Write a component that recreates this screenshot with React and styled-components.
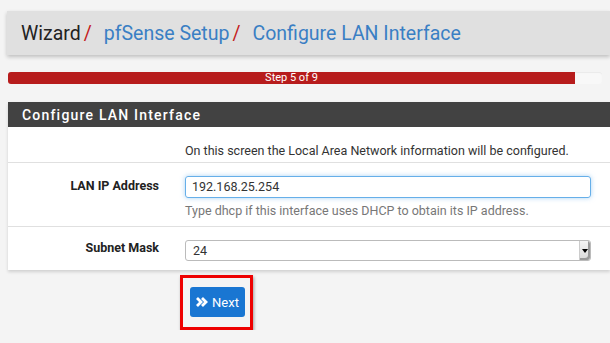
import React from "react";
import styled, { createGlobalStyle } from "styled-components";

const GlobalStyle = createGlobalStyle`
  html, body {
    margin: 0;
    padding: 0;
    background: #f4f4f4;
    font-family: Roboto, "Liberation Sans", sans-serif;
    overflow: hidden;
  }
`;

const Page = styled.div`
  display: flex;
  flex-direction: column;
  padding-top: 11px;
  width: 610px;
`;

const Header = styled.div`
  margin-left: 7px;
  height: 44px;
  display: flex;
  align-items: center;
  padding-left: 14px;
  background: #e0e0e0;
  box-shadow: 0 2px 4px rgba(0, 0, 0, 0.22);
  font-size: 19.5px;
  color: #222;
`;

const Crumb = styled.span`
  color: ${({ $link }) => ($link ? "#3a7fc4" : "#222")};
`;

const Sep = styled.span`
  color: #c41b1b;
  margin: 0 12px 0 3px;
`;

const Track = styled.div`
  margin: 17px 8px 0 8px;
  height: 12px;
  background: #f8f8f8;
  border-radius: 3px;
  box-shadow: inset 0 1px 1px rgba(0, 0, 0, 0.06);
  display: flex;
`;

const Bar = styled.div`
  height: 100%;
  background: #b71c1c;
  border-radius: 3px 0 0 3px;
  color: #fff;
  font-size: 11px;
  line-height: 12px;
  text-align: center;
`;

const Panel = styled.div`
  margin: 18px 0 0 8px;
  background: #fff;
  box-shadow: 0 2px 3px rgba(0, 0, 0, 0.15);
`;

const PanelHeading = styled.div`
  height: 25px;
  background: #424242;
  color: #fff;
  font-size: 14px;
  font-weight: 500;
  letter-spacing: 1.2px;
  line-height: 26px;
  padding-left: 14px;
`;

const Row = styled.div`
  display: grid;
  grid-template-columns: 162px 1fr;
  height: ${({ $h }) => $h}px;
  border-top: ${({ $first }) => ($first ? "none" : "1px solid #e0e0e0")};
  font-size: 12.5px;
  color: #333;
`;

const Label = styled.div`
  text-align: right;
  padding-right: 11px;
  padding-top: ${({ $top }) => $top}px;
  font-weight: 700;
  color: #222;
`;

const Field = styled.div`
  display: flex;
  flex-direction: column;
  padding: ${({ $top }) => $top}px 19px 0 15px;
`;

const Input = styled.div`
  height: 20px;
  border: 1px solid #66afe9;
  border-radius: 3px;
  box-shadow: 0 0 5px rgba(102, 175, 233, 0.55);
  padding-left: 6px;
  line-height: 20px;
  color: #333;
`;

const Help = styled.div`
  margin-top: 5px;
  color: #777;
`;

const Select = styled.div`
  height: 19px;
  border: 1px solid #bbb;
  border-radius: 3px;
  display: flex;
  align-items: stretch;
  line-height: 19px;
  color: #333;
`;

const SelectValue = styled.div`
  flex: 1;
  padding-left: 7px;
`;

const SelectArrow = styled.div`
  width: 10px;
  display: flex;
  align-items: center;
  justify-content: center;
  background: linear-gradient(#f4f4f4, #d8d8d8);
  border-left: 1px solid #ccc;
  box-shadow: inset -2px -2px 0 #999;
  border-radius: 0 3px 3px 0;

  &::after {
    content: "";
    border-left: 3px solid transparent;
    border-right: 3px solid transparent;
    border-top: 4px solid #000;
  }
`;

const Actions = styled.div`
  display: flex;
  padding: 5px 0 0 180px;
`;

const Highlight = styled.div`
  width: 67px;
  height: 49px;
  border: 3px solid #ee0000;
  box-shadow: 1px 2px 3px rgba(0, 0, 0, 0.35);
  display: flex;
  align-items: center;
  justify-content: center;
`;

const Button = styled.div`
  width: 55px;
  height: 30px;
  margin-left: 2px;
  margin-top: -1px;
  background: #1976d2;
  border-radius: 3px;
  color: #fff;
  font-size: 13px;
  display: flex;
  align-items: center;
  justify-content: center;
  gap: 4px;
`;

function DoubleAngle() {
  return (
    <svg width="12" height="10" viewBox="0 0 12 10">
      <path d="M1 1 L5 5 L1 9" stroke="#fff" strokeWidth="2.8" fill="none" />
      <path d="M6 1 L10 5 L6 9" stroke="#fff" strokeWidth="2.8" fill="none" />
    </svg>
  );
}

export default function App() {
  return (
    <Page>
      <GlobalStyle />
      <Header>
        <Crumb>Wizard</Crumb>
        <Sep>/</Sep>
        <Crumb $link>pfSense Setup</Crumb>
        <Sep>/</Sep>
        <Crumb $link>Configure LAN Interface</Crumb>
      </Header>
      <Track>
        <Bar style={{ width: `${(567 / 594) * 100}%` }}>Step 5 of 9</Bar>
      </Track>
      <Panel>
        <PanelHeading>Configure LAN Interface</PanelHeading>
        <Row $h={35} $first>
          <Label $top={0} />
          <Field $top={16}>On this screen the Local Area Network information will be configured.</Field>
        </Row>
        <Row $h={63}>
          <Label $top={15}>LAN IP Address</Label>
          <Field $top={13}>
            <Input>192.168.25.254</Input>
            <Help>Type dhcp if this interface uses DHCP to obtain its IP address.</Help>
          </Field>
        </Row>
        <Row $h={43}>
          <Label $top={13}>Subnet Mask</Label>
          <Field $top={13}>
            <Select>
              <SelectValue>24</SelectValue>
              <SelectArrow />
            </Select>
          </Field>
        </Row>
      </Panel>
      <Actions>
        <Highlight>
          <Button>
            <DoubleAngle />
            Next
          </Button>
        </Highlight>
      </Actions>
    </Page>
  );
}
